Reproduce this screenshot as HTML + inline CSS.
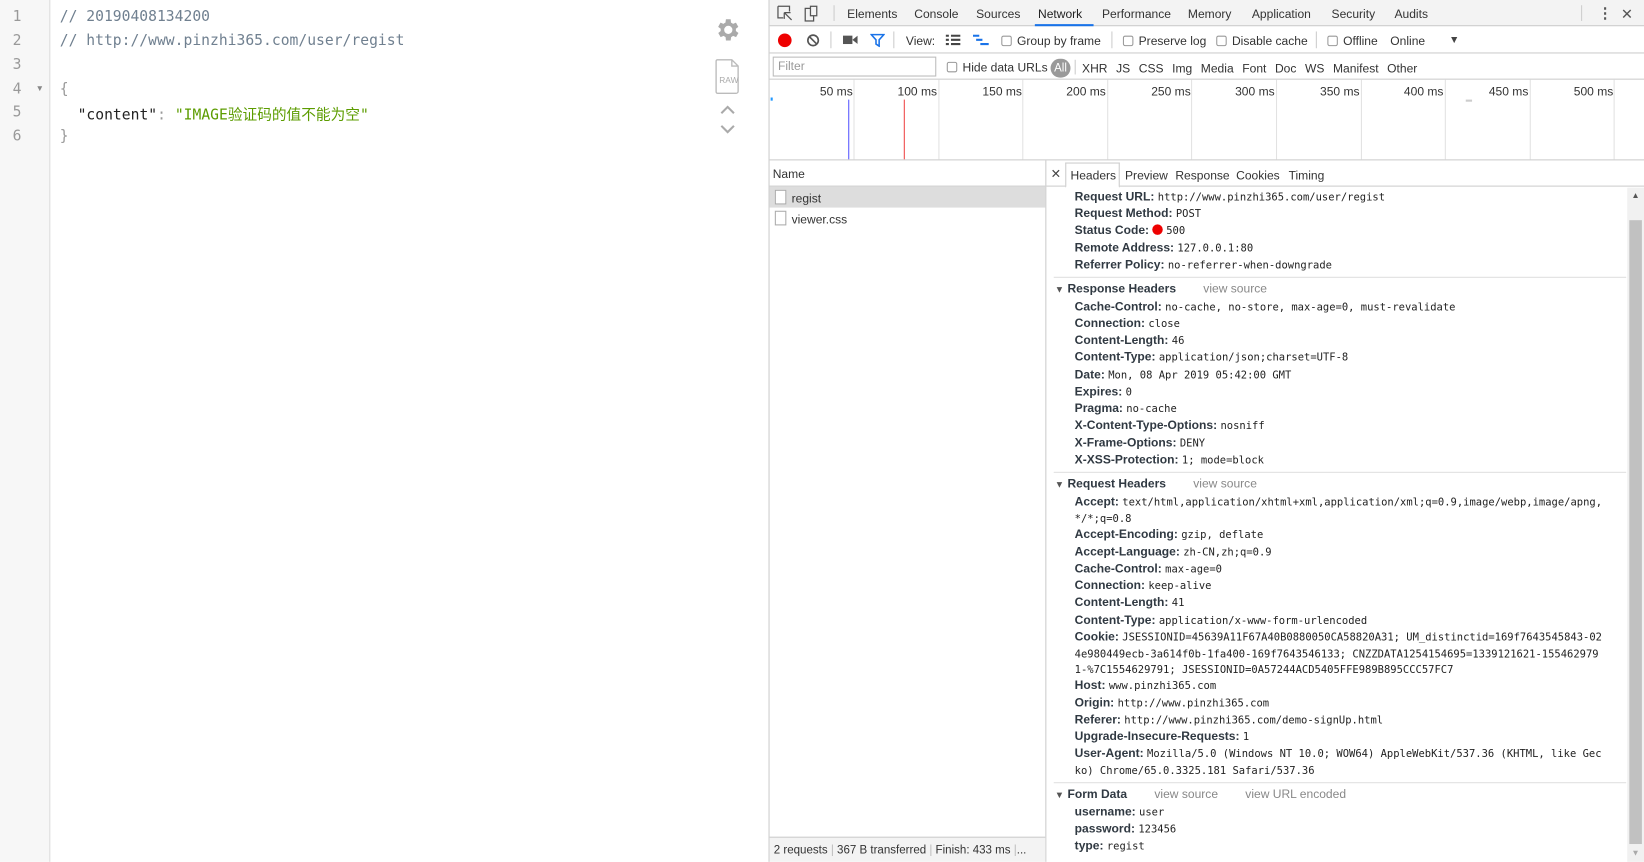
<!DOCTYPE html>
<html><head><meta charset="utf-8"><style>
*{box-sizing:border-box;margin:0;padding:0}
html,body{width:1644px;height:862px;overflow:hidden;background:#fff}
#w{width:1568px;height:822px;position:relative;transform:scale(1.04847);transform-origin:0 0;font-family:"Liberation Sans",sans-serif;font-size:12px;color:#333}
.a{position:absolute;white-space:nowrap}
.code{font-size:14px;font-family:"DejaVu Sans Mono","Liberation Mono","Noto Sans CJK SC",monospace;margin-top:1px}
.ln{color:#999;left:12px;font-size:14px;font-family:"DejaVu Sans Mono",monospace;margin-top:1px}
.ui{font-size:11.5px;color:#333;margin-top:2px}
.h{left:1025px;font-size:11.5px;color:#333;margin-top:1px}
.h b{font-weight:bold;color:#303942}
.h span{font-family:"DejaVu Sans Mono",monospace;font-size:10px;color:#222}
.sec{left:1006px;font-weight:bold;font-size:11.5px;color:#303942;margin-top:1px}
.vs{font-weight:normal;color:#888;margin-left:26px}
.hr{position:absolute;left:1005px;width:546px;height:1px;background:#e0e0e0}
.vl{position:absolute;top:76px;width:1px;height:76px;background:#e2e2e2}
.tk{top:82px;font-size:11.5px}
.cb{display:inline-block;width:10px;height:10px;border:1px solid #999;border-radius:2px;background:#fff;vertical-align:-1px;margin-right:5px}
</style></head><body><div id="w">
<div class="a" style="left:0;top:0;width:48px;height:822px;background:#f7f7f7;border-right:1px solid #ddd"></div>
<div class="a ln" style="top:7px">1</div>
<div class="a ln" style="top:30px">2</div>
<div class="a ln" style="top:53px">3</div>
<div class="a ln" style="top:76px">4</div>
<div class="a ln" style="top:98px">5</div>
<div class="a ln" style="top:121px">6</div>
<div class="a" style="left:34px;top:80px;font-size:8px;color:#888">▼</div>
<div class="a code" style="left:57px;top:7px;color:#708090">// 20190408134200</div>
<div class="a code" style="left:57px;top:30px;color:#708090">// http://www.pinzhi365.com/user/regist</div>
<div class="a code" style="left:57px;top:76px;color:#999">{</div>
<div class="a code" style="left:74px;top:98px;color:#222">"content"<span style="color:#999">:</span> <span style="color:#5c9c00">"IMAGE验证码的值不能为空"</span></div>
<div class="a code" style="left:57px;top:121px;color:#999">}</div>
<svg class="a" style="left:680px;top:15px" width="27" height="27" viewBox="0 0 24 24"><path fill="#aaa" d="M19.4 13a7.5 7.5 0 0 0 0-2l2.1-1.6-2-3.5-2.5 1a7 7 0 0 0-1.7-1L15 3h-4l-.4 2.9a7 7 0 0 0-1.7 1l-2.5-1-2 3.5L6.6 11a7.5 7.5 0 0 0 0 2l-2.1 1.6 2 3.5 2.5-1a7 7 0 0 0 1.7 1L11 21h4l.4-2.9a7 7 0 0 0 1.7-1l2.5 1 2-3.5zM13 15.5a3.5 3.5 0 1 1 0-7 3.5 3.5 0 0 1 0 7z"/></svg>
<svg class="a" style="left:682px;top:56px" width="24" height="34" viewBox="0 0 24 34"><path d="M2 1h14l6 6v24a2 2 0 0 1-2 2H2.5a1.5 1.5 0 0 1-1.5-1.5V2.5A1.5 1.5 0 0 1 2 1zM16 1v6h6" fill="none" stroke="#bbb" stroke-width="1.3"/><text x="4" y="23" font-size="8" fill="#aaa" font-family="Liberation Sans">RAW</text></svg>
<svg class="a" style="left:686px;top:99px" width="16" height="30" viewBox="0 0 16 30"><path d="M2 9l6-6 6 6M2 21l6 6 6-6" fill="none" stroke="#aaa" stroke-width="2"/></svg>
<div class="a" style="left:733px;top:0;width:835px;height:822px;border-left:1px solid #ccc;background:#fff"></div>
<div class="a" style="left:734px;top:0;width:834px;height:25px;background:#f3f3f3;border-bottom:1px solid #ccc"></div>
<svg class="a" style="left:741px;top:5px" width="40" height="16"><path d="M1 1h11v5M1 1v11h5M7 7l7 7M7 7v6M7 7h6" fill="none" stroke="#555" stroke-width="1.2"/><rect x="27" y="3" width="8" height="12" fill="none" stroke="#555" stroke-width="1.2"/><rect x="32" y="1" width="6" height="9" fill="#f3f3f3" stroke="#555" stroke-width="1.2"/></svg>
<div class="a" style="left:795px;top:5px;width:1px;height:15px;background:#ccc"></div>
<div class="a ui" style="left:808px;top:6px">Elements</div>
<div class="a ui" style="left:872px;top:6px">Console</div>
<div class="a ui" style="left:931px;top:6px">Sources</div>
<div class="a ui" style="left:990px;top:6px;color:#222">Network</div>
<div class="a" style="left:987px;top:23px;width:56px;height:2px;background:#1a73e8"></div>
<div class="a ui" style="left:1051px;top:6px">Performance</div>
<div class="a ui" style="left:1133px;top:6px">Memory</div>
<div class="a ui" style="left:1194px;top:6px">Application</div>
<div class="a ui" style="left:1270px;top:6px">Security</div>
<div class="a ui" style="left:1330px;top:6px">Audits</div>
<div class="a" style="left:1508px;top:5px;width:1px;height:15px;background:#ccc"></div>
<div class="a" style="left:1524px;top:4px;font-size:14px;color:#555;font-weight:bold">⋮</div>
<div class="a" style="left:1546px;top:5px;font-size:14px;color:#555">✕</div>
<div class="a" style="left:734px;top:25px;width:834px;height:26px;border-bottom:1px solid #ccc"></div>
<div class="a" style="left:742px;top:32px;width:13px;height:13px;border-radius:50%;background:#e00"></div>
<svg class="a" style="left:769px;top:32px" width="13" height="13"><circle cx="6.5" cy="6.5" r="5" fill="none" stroke="#555" stroke-width="1.6"/><path d="M3 3l7 7" stroke="#555" stroke-width="1.6"/></svg>
<div class="a" style="left:792px;top:30px;width:1px;height:16px;background:#ccc"></div>
<svg class="a" style="left:804px;top:33px" width="14" height="10"><rect x="0" y="1" width="9" height="8" fill="#555"/><path d="M9 5l5-4v8z" fill="#555"/></svg>
<svg class="a" style="left:830px;top:32px" width="14" height="13"><path d="M1 1h12l-4.5 5v6l-3-2V6z" fill="none" stroke="#1a73e8" stroke-width="1.5"/></svg>
<div class="a" style="left:852px;top:30px;width:1px;height:16px;background:#ccc"></div>
<div class="a ui" style="left:864px;top:32px">View:</div>
<svg class="a" style="left:902px;top:33px" width="14" height="11"><path d="M0 1h3M5 1h9M0 5h3M5 5h9M0 9h3M5 9h9" stroke="#444" stroke-width="2"/></svg>
<svg class="a" style="left:928px;top:33px" width="16" height="11"><path d="M0 1h6M3 5h6M7 9h8" stroke="#1a73e8" stroke-width="2"/></svg>
<div class="a ui" style="left:955px;top:32px"><span class="cb"></span>Group by frame</div>
<div class="a" style="left:1060px;top:30px;width:1px;height:16px;background:#ccc"></div>
<div class="a ui" style="left:1071px;top:32px"><span class="cb"></span>Preserve log</div>
<div class="a ui" style="left:1160px;top:32px"><span class="cb"></span>Disable cache</div>
<div class="a" style="left:1255px;top:30px;width:1px;height:16px;background:#ccc"></div>
<div class="a ui" style="left:1266px;top:32px"><span class="cb"></span>Offline</div>
<div class="a ui" style="left:1326px;top:32px">Online</div>
<div class="a" style="left:1382px;top:33px;font-size:10px;color:#444">▼</div>
<div class="a" style="left:734px;top:51px;width:834px;height:25px;border-bottom:1px solid #ccc"></div>
<div class="a" style="left:737px;top:54px;width:156px;height:19px;border:1px solid #bbb;background:#fff;color:#999;font-size:11.5px;padding:3px 4px 0">Filter</div>
<div class="a ui" style="left:903px;top:57px"><span class="cb"></span>Hide data URLs</div>
<div class="a" style="left:1002px;top:56px;width:19px;height:18px;border-radius:9px;background:#999;color:#fff;font-size:11px;text-align:center;line-height:18px">All</div>
<div class="a" style="left:1025px;top:57px;width:1px;height:14px;background:#ccc"></div>
<div class="a ui" style="left:1032px;top:58px;word-spacing:5px">XHR JS CSS Img Media Font Doc WS Manifest Other</div>
<div class="vl" style="left:814px"></div><div class="vl" style="left:895px"></div><div class="vl" style="left:975px"></div><div class="vl" style="left:1056px"></div><div class="vl" style="left:1136px"></div><div class="vl" style="left:1217px"></div><div class="vl" style="left:1298px"></div><div class="vl" style="left:1378px"></div><div class="vl" style="left:1459px"></div><div class="vl" style="left:1539px"></div>
<div class="a tk" style="left:782px">50 ms</div><div class="a tk" style="left:856px">100 ms</div><div class="a tk" style="left:937px">150 ms</div><div class="a tk" style="left:1017px">200 ms</div><div class="a tk" style="left:1098px">250 ms</div><div class="a tk" style="left:1178px">300 ms</div><div class="a tk" style="left:1259px">350 ms</div><div class="a tk" style="left:1339px">400 ms</div><div class="a tk" style="left:1420px">450 ms</div><div class="a tk" style="left:1501px">500 ms</div>
<div class="a" style="left:809px;top:95px;width:1px;height:57px;background:#55f"></div>
<div class="a" style="left:862px;top:95px;width:1px;height:57px;background:#e44"></div>
<div class="a" style="left:735px;top:93px;width:2px;height:3px;background:#29f"></div>
<div class="a" style="left:1398px;top:95px;width:6px;height:2px;background:#ccc"></div>
<div class="a" style="left:734px;top:152px;width:834px;height:1px;background:#ccc"></div>
<div class="a" style="left:734px;top:153px;width:263px;height:25px;border-bottom:1px solid #ccc"></div>
<div class="a ui" style="left:737px;top:159px">Name</div>
<div class="a" style="left:734px;top:178px;width:263px;height:20px;background:#ddd"></div>
<div class="a" style="left:739px;top:181px;width:11px;height:14px;border:1px solid #aaa;background:#fff"></div>
<div class="a ui" style="left:755px;top:182px">regist</div>
<div class="a" style="left:739px;top:201px;width:11px;height:14px;border:1px solid #aaa;background:#fff"></div>
<div class="a ui" style="left:755px;top:202px">viewer.css</div>
<div class="a" style="left:997px;top:153px;width:1px;height:669px;background:#ccc"></div>
<div class="a" style="left:734px;top:798px;width:263px;height:24px;background:#f3f3f3;border-top:1px solid #ccc"></div>
<div class="a" style="left:738px;top:805px;font-size:11px;color:#333">2 requests <span style="color:#bbb">|</span> 367 B transferred <span style="color:#bbb">|</span> Finish: 433 ms <span style="color:#bbb">|</span>...</div>
<div class="a" style="left:998px;top:153px;width:570px;height:25px;border-bottom:1px solid #ccc"></div>
<div class="a" style="left:1002px;top:159px;font-size:12px;color:#444">✕</div>
<div class="a" style="left:1016px;top:155px;width:52px;height:24px;border:1px solid #ccc;border-bottom:1px solid #fff;background:#fff"></div>
<div class="a ui" style="left:1021px;top:160px">Headers</div>
<div class="a ui" style="left:1073px;top:160px">Preview</div>
<div class="a ui" style="left:1121px;top:160px">Response</div>
<div class="a ui" style="left:1179px;top:160px">Cookies</div>
<div class="a ui" style="left:1229px;top:160px">Timing</div>
<div class="a" style="left:1552px;top:179px;width:16px;height:643px;background:#f1f1f1"></div>
<div class="a" style="left:1554px;top:210px;width:12px;height:595px;background:#c1c1c1"></div>
<div class="a" style="left:1556px;top:182px;font-size:8px;color:#555">▲</div>
<div class="a" style="left:1556px;top:809px;font-size:8px;color:#aaa">▼</div>

<div class="a h" style="top:181px"><b>Request URL:</b> <span>http://www.pinzhi365.com/user/regist</span></div>
<div class="a h" style="top:197px"><b>Request Method:</b> <span>POST</span></div>
<div class="a h" style="top:213px"><b>Status Code:</b> <i style="display:inline-block;width:10px;height:10px;border-radius:50%;background:#e00;vertical-align:-1px"></i> <span>500</span></div>
<div class="a h" style="top:230px"><b>Remote Address:</b> <span>127.0.0.1:80</span></div>
<div class="a h" style="top:246px"><b>Referrer Policy:</b> <span>no-referrer-when-downgrade</span></div>
<div class="hr" style="top:264px"></div>
<div class="a sec" style="top:269px"><span style="font-size:9px;color:#555">▼</span> Response Headers<span class="vs">view source</span></div>
<div class="a h" style="top:286px"><b>Cache-Control:</b> <span>no-cache, no-store, max-age=0, must-revalidate</span></div>
<div class="a h" style="top:302px"><b>Connection:</b> <span>close</span></div>
<div class="a h" style="top:318px"><b>Content-Length:</b> <span>46</span></div>
<div class="a h" style="top:334px"><b>Content-Type:</b> <span>application/json;charset=UTF-8</span></div>
<div class="a h" style="top:351px"><b>Date:</b> <span>Mon, 08 Apr 2019 05:42:00 GMT</span></div>
<div class="a h" style="top:367px"><b>Expires:</b> <span>0</span></div>
<div class="a h" style="top:383px"><b>Pragma:</b> <span>no-cache</span></div>
<div class="a h" style="top:399px"><b>X-Content-Type-Options:</b> <span>nosniff</span></div>
<div class="a h" style="top:416px"><b>X-Frame-Options:</b> <span>DENY</span></div>
<div class="a h" style="top:432px"><b>X-XSS-Protection:</b> <span>1; mode=block</span></div>
<div class="hr" style="top:450px"></div>
<div class="a sec" style="top:455px"><span style="font-size:9px;color:#555">▼</span> Request Headers<span class="vs">view source</span></div>
<div class="a h" style="top:472px"><b>Accept:</b> <span>text/html,application/xhtml+xml,application/xml;q=0.9,image/webp,image/apng,</span></div>
<div class="a h" style="top:488px"><span>*/*;q=0.8</span></div>
<div class="a h" style="top:503px"><b>Accept-Encoding:</b> <span>gzip, deflate</span></div>
<div class="a h" style="top:520px"><b>Accept-Language:</b> <span>zh-CN,zh;q=0.9</span></div>
<div class="a h" style="top:536px"><b>Cache-Control:</b> <span>max-age=0</span></div>
<div class="a h" style="top:552px"><b>Connection:</b> <span>keep-alive</span></div>
<div class="a h" style="top:568px"><b>Content-Length:</b> <span>41</span></div>
<div class="a h" style="top:585px"><b>Content-Type:</b> <span>application/x-www-form-urlencoded</span></div>
<div class="a h" style="top:601px"><b>Cookie:</b> <span>JSESSIONID=45639A11F67A40B0880050CA58820A31; UM_distinctid=169f7643545843-02</span></div>
<div class="a h" style="top:617px"><span>4e980449ecb-3a614f0b-1fa400-169f7643546133; CNZZDATA1254154695=1339121621-155462979</span></div>
<div class="a h" style="top:632px"><span>1-%7C1554629791; JSESSIONID=0A57244ACD5405FFE989B895CCC57FC7</span></div>
<div class="a h" style="top:647px"><b>Host:</b> <span>www.pinzhi365.com</span></div>
<div class="a h" style="top:664px"><b>Origin:</b> <span>http://www.pinzhi365.com</span></div>
<div class="a h" style="top:680px"><b>Referer:</b> <span>http://www.pinzhi365.com/demo-signUp.html</span></div>
<div class="a h" style="top:696px"><b>Upgrade-Insecure-Requests:</b> <span>1</span></div>
<div class="a h" style="top:712px"><b>User-Agent:</b> <span>Mozilla/5.0 (Windows NT 10.0; WOW64) AppleWebKit/537.36 (KHTML, like Gec</span></div>
<div class="a h" style="top:728px"><span>ko) Chrome/65.0.3325.181 Safari/537.36</span></div>
<div class="hr" style="top:746px"></div>
<div class="a sec" style="top:751px"><span style="font-size:9px;color:#555">▼</span> Form Data<span class="vs">view source</span><span class="vs">view URL encoded</span></div>
<div class="a h" style="top:768px"><b>username:</b> <span>user</span></div>
<div class="a h" style="top:784px"><b>password:</b> <span>123456</span></div>
<div class="a h" style="top:800px"><b>type:</b> <span>regist</span></div>
</div></body></html>
